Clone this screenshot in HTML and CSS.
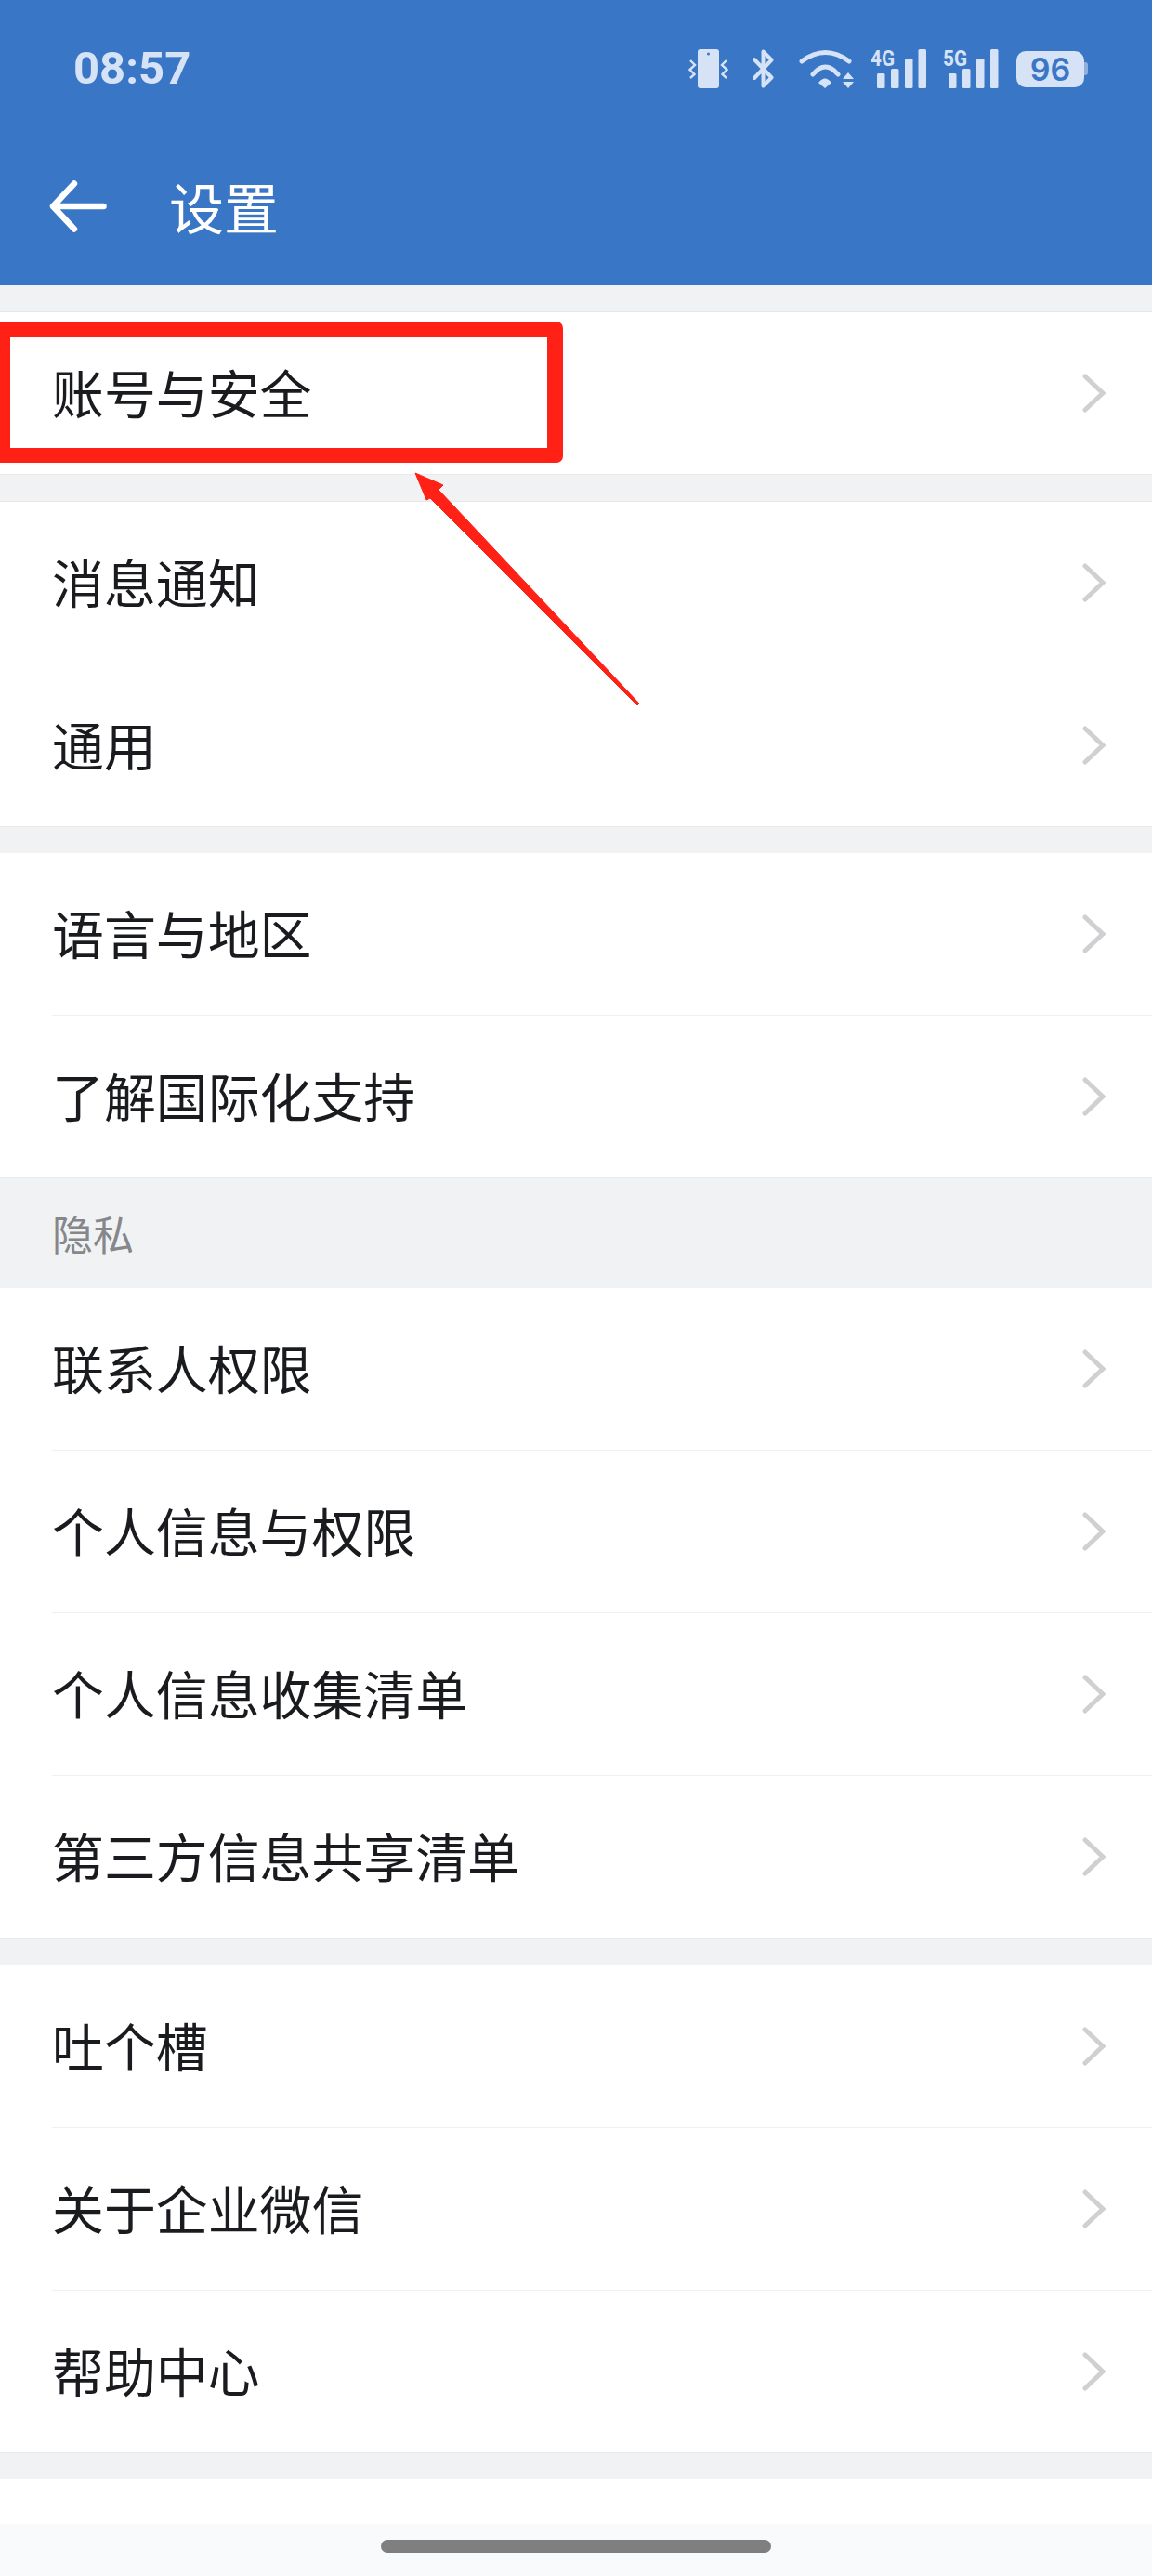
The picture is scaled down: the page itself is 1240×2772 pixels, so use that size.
FILE: index.html
```html
<!DOCTYPE html>
<html lang="zh-CN">
<head>
    <meta charset="UTF-8">
    <meta name="viewport" content="width=device-width, initial-scale=1.0">
    <title>设置</title>
    <link rel="stylesheet" href="styles.css">
</head>
<body>

    <header class="header">
        <div class="status-bar">
            <span class="time">08:57</span>
            <div class="status-icons">
                <svg class="icon-vibrate" width="43" height="42" viewBox="0 0 43 42">
                    <rect x="10" y="0" width="23" height="42" rx="3" fill="#d6e3f6"/>
                    <circle cx="21.5" cy="5" r="1.5" fill="#3a76c6"/>
                    <path d="M2 12 L7 17 L1.5 22 L6.5 27 L2 31 M41 12 L36 17 L41.5 22 L36.5 27 L41 31" fill="none" stroke="#d6e3f6" stroke-width="2.4"/>
                </svg>
                <svg class="icon-bt" width="23" height="42" viewBox="0 0 23 42">
                    <path d="M2 11 L20.5 30.5 L11.5 39.5 V2.5 L20.5 11.5 L2 31" fill="none" stroke="#d6e3f6" stroke-width="4" stroke-linecap="round" stroke-linejoin="round"/>
                </svg>
                <svg class="icon-wifi" width="60" height="42" viewBox="0 0 60 42">
                    <path d="M3 13 Q28.5 -6 54 13 M15 27 Q28.5 11 42 27" fill="none" stroke="#d6e3f6" stroke-width="5" stroke-linecap="round"/>
                    <path d="M21 36 Q28 27 35 36 L28 42 Z" fill="#d6e3f6"/>
                    <path d="M47 32 L53 25 L59 32 Z M47 35 L59 35 L53 42 Z" fill="#d6e3f6"/>
                </svg>
                <svg class="icon-signal" width="60" height="42" viewBox="0 0 60 42">
                    <text class="net-label" x="0" y="18" textLength="26" lengthAdjust="spacingAndGlyphs">4G</text>
                    <rect x="7" y="26" width="8.5" height="16" rx="1.5" fill="#d6e3f6"/>
                    <rect x="22" y="21" width="8.5" height="21" rx="1.5" fill="#d6e3f6"/>
                    <rect x="37" y="10" width="8.5" height="32" rx="1.5" fill="#d6e3f6"/>
                    <rect x="51.5" y="0" width="8.5" height="42" rx="1.5" fill="#d6e3f6"/>
                </svg>
                <svg class="icon-signal" width="60" height="42" viewBox="0 0 60 42">
                    <text class="net-label" x="0" y="18" textLength="26" lengthAdjust="spacingAndGlyphs">5G</text>
                    <rect x="6" y="26" width="8.5" height="16" rx="1.5" fill="#d6e3f6"/>
                    <rect x="21" y="21" width="8.5" height="21" rx="1.5" fill="#d6e3f6"/>
                    <rect x="36" y="10" width="8.5" height="32" rx="1.5" fill="#d6e3f6"/>
                    <rect x="51" y="0" width="8.5" height="42" rx="1.5" fill="#d6e3f6"/>
                </svg>
                <div class="battery">
                    <span class="battery-body">96</span>
                    <span class="battery-nub"></span>
                </div>
            </div>
        </div>
        <div class="nav-bar">
            <svg class="back-arrow" width="62" height="56" viewBox="0 0 62 56">
                <path d="M58.5 28 H4 M27 3.5 L4 28 L27 52.5" fill="none" stroke="#ffffff" stroke-width="6.5" stroke-linecap="round" stroke-linejoin="round"/>
            </svg>
            <h1 class="nav-title">设置</h1>
        </div>
    </header>

    <main class="settings">
        <div class="gap gap-first"></div>
        <section class="group">
            <div class="row"><span>账号与安全</span><svg class="chevron" width="26" height="42" viewBox="0 0 26 42"><path d="M3 3 L22 21 L3 39" fill="none" stroke="#cfd0d2" stroke-width="5" stroke-linecap="round"/></svg></div>
        </section>

        <div class="gap"></div>
        <section class="group">
            <div class="row"><span>消息通知</span><svg class="chevron" width="26" height="42" viewBox="0 0 26 42"><path d="M3 3 L22 21 L3 39" fill="none" stroke="#cfd0d2" stroke-width="5" stroke-linecap="round"/></svg></div>
            <div class="row"><span>通用</span><svg class="chevron" width="26" height="42" viewBox="0 0 26 42"><path d="M3 3 L22 21 L3 39" fill="none" stroke="#cfd0d2" stroke-width="5" stroke-linecap="round"/></svg></div>
        </section>

        <div class="gap"></div>
        <section class="group group-flat">
            <div class="row"><span>语言与地区</span><svg class="chevron" width="26" height="42" viewBox="0 0 26 42"><path d="M3 3 L22 21 L3 39" fill="none" stroke="#cfd0d2" stroke-width="5" stroke-linecap="round"/></svg></div>
            <div class="row"><span>了解国际化支持</span><svg class="chevron" width="26" height="42" viewBox="0 0 26 42"><path d="M3 3 L22 21 L3 39" fill="none" stroke="#cfd0d2" stroke-width="5" stroke-linecap="round"/></svg></div>
        </section>

        <div class="section-label">隐私</div>
        <section class="group group-flat">
            <div class="row"><span>联系人权限</span><svg class="chevron" width="26" height="42" viewBox="0 0 26 42"><path d="M3 3 L22 21 L3 39" fill="none" stroke="#cfd0d2" stroke-width="5" stroke-linecap="round"/></svg></div>
            <div class="row"><span>个人信息与权限</span><svg class="chevron" width="26" height="42" viewBox="0 0 26 42"><path d="M3 3 L22 21 L3 39" fill="none" stroke="#cfd0d2" stroke-width="5" stroke-linecap="round"/></svg></div>
            <div class="row"><span>个人信息收集清单</span><svg class="chevron" width="26" height="42" viewBox="0 0 26 42"><path d="M3 3 L22 21 L3 39" fill="none" stroke="#cfd0d2" stroke-width="5" stroke-linecap="round"/></svg></div>
            <div class="row"><span>第三方信息共享清单</span><svg class="chevron" width="26" height="42" viewBox="0 0 26 42"><path d="M3 3 L22 21 L3 39" fill="none" stroke="#cfd0d2" stroke-width="5" stroke-linecap="round"/></svg></div>
        </section>

        <div class="gap"></div>
        <section class="group">
            <div class="row"><span>吐个槽</span><svg class="chevron" width="26" height="42" viewBox="0 0 26 42"><path d="M3 3 L22 21 L3 39" fill="none" stroke="#cfd0d2" stroke-width="5" stroke-linecap="round"/></svg></div>
            <div class="row"><span>关于企业微信</span><svg class="chevron" width="26" height="42" viewBox="0 0 26 42"><path d="M3 3 L22 21 L3 39" fill="none" stroke="#cfd0d2" stroke-width="5" stroke-linecap="round"/></svg></div>
            <div class="row"><span>帮助中心</span><svg class="chevron" width="26" height="42" viewBox="0 0 26 42"><path d="M3 3 L22 21 L3 39" fill="none" stroke="#cfd0d2" stroke-width="5" stroke-linecap="round"/></svg></div>
        </section>

        <div class="gap"></div>
        <div class="blank"></div>
    </main>

    <footer class="home-bar"><span class="home-handle"></span></footer>

    <!-- red annotation over the first row -->
    <div class="mark-box"></div>
    <svg class="mark-arrow" width="250" height="260" viewBox="0 0 250 260">
        <path d="M7 9 L37 22 L32 27 L248 257 L246 259 L23 36 L19 38 Z" fill="#ff2115" stroke="#ff2115" stroke-width="1" stroke-linejoin="round"/>
    </svg>

</body>
</html>
```

FILE: styles.css
```css
* {
    margin: 0;
    padding: 0;
    box-sizing: border-box;
}
html, body {
    width: 1240px;
    height: 2772px;
    overflow: hidden;
}
body {
    position: relative;
    display: flex;
    flex-direction: column;
    background-color: #f1f2f4;
    color: #191b1f;
    font-family: "Noto Sans CJK SC", "Noto Sans", sans-serif;
}
.header {
    height: 307px;
    background-color: #3a76c6;
}
.status-bar {
    height: 148px;
    padding: 0 69px 0 79px;
    display: flex;
    justify-content: space-between;
    align-items: center;
}
.time {
    font-family: Roboto, sans-serif;
    font-size: 49px;
    font-weight: 700;
    line-height: 1;
    margin-top: -2px;
    color: #d6e3f6;
}
.status-icons {
    display: flex;
    align-items: center;
    gap: 17px;
}
.icon-bt {
    margin-left: 9px;
}
.icon-wifi {
    margin-left: 10px;
}
.icon-signal {
    overflow: visible;
}
.icon-signal + .icon-signal {
    margin-left: 1px;
}
.net-label {
    font-family: Roboto, sans-serif;
    font-size: 24px;
    font-weight: 700;
    fill: #d6e3f6;
}
.battery {
    display: flex;
    align-items: center;
    margin-left: 2px;
}
.battery-body {
    width: 73px;
    height: 39px;
    border-radius: 10px;
    background-color: #d6e3f6;
    color: #3a76c6;
    font-family: Inter, sans-serif;
    font-size: 34px;
    font-weight: 600;
    line-height: 39px;
    text-align: center;
}
.battery-nub {
    width: 4px;
    height: 14px;
    border-radius: 0 3px 3px 0;
    background-color: #8fb0de;
}
.nav-bar {
    height: 159px;
    padding: 0 0 12px 53px;
    display: flex;
    align-items: center;
    gap: 67px;
}
.nav-title {
    font-size: 59px;
    font-weight: 400;
    color: #ffffff;
}
.settings {
    flex: 1;
}
.gap {
    height: 29px;
    border-top: 1px solid #e9eaec;
}
.gap-first {
    height: 28px;
    border-top: none;
}
.group {
    background-color: #ffffff;
    border-top: 1px solid #e6e7e9;
}
.group-flat {
    border-top: none;
}
.row {
    height: 174px;
    margin-left: 56px;
    padding-right: 49px;
    display: flex;
    justify-content: space-between;
    align-items: center;
    font-size: 55.9px;
}
.row + .row {
    height: 175px;
    border-top: 1px solid #eff0f1;
}
.row span {
    margin-bottom: 5px;
}
.chevron {
    flex-shrink: 0;
}
.section-label {
    height: 119px;
    padding-left: 56px;
    display: flex;
    align-items: center;
    font-size: 44px;
    color: #85878b;
    border-top: 1px solid #e9eaec;
}
.blank {
    height: 48px;
    background-color: #ffffff;
}
.home-bar {
    height: 56px;
    padding-top: 17px;
    display: flex;
    justify-content: center;
    align-items: flex-start;
    background-color: #f9fafc;
}
.home-handle {
    width: 420px;
    height: 14px;
    border-radius: 7px;
    background-color: #7f7f7f;
}
.mark-box {
    position: absolute;
    left: 0;
    top: 346px;
    width: 606px;
    height: 152px;
    border: solid #ff2115;
    border-width: 17px 17px 16px 11px;
    border-radius: 0 7px 7px 0;
}
.mark-arrow {
    position: absolute;
    left: 440px;
    top: 500px;
}
```
